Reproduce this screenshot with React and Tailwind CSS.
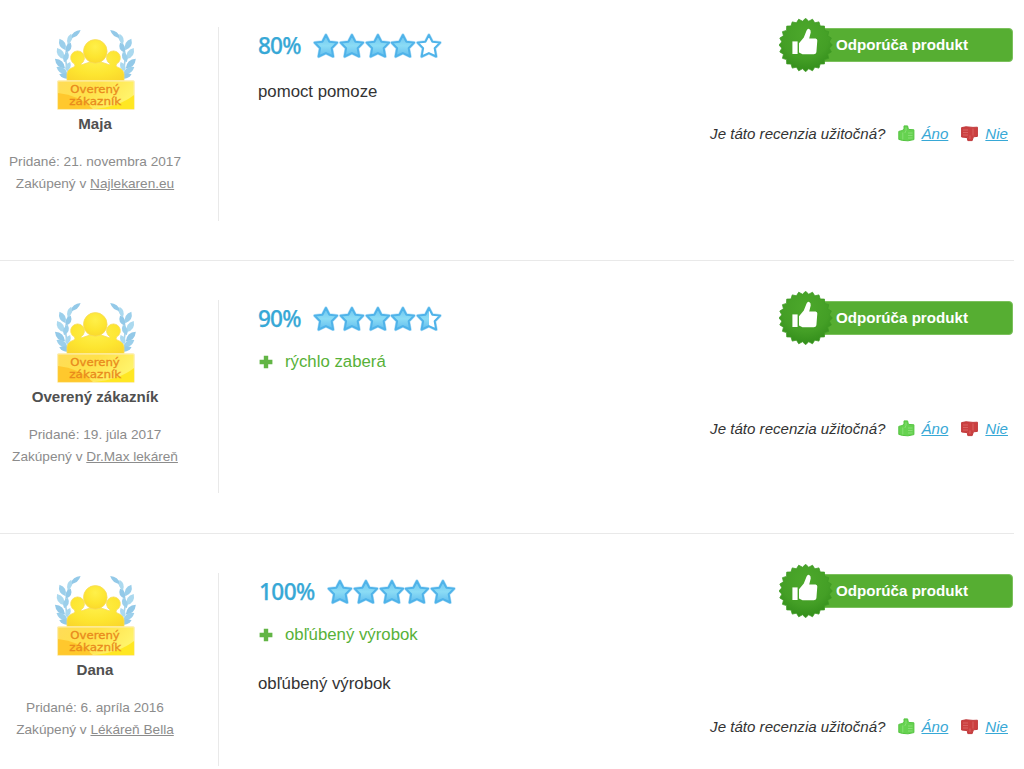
import React from "react";

const LEAVES = [
  [22.5, 7, -38, 6.5, 3],
  [16.5, 12, -72, 5.5, 3],
  [9.5, 17.5, 62, 6.5, 4],
  [15.5, 20.5, -66, 5.5, 3.6],
  [7.5, 26.5, 58, 6.5, 4.2],
  [13, 30, -70, 5.5, 3.6],
  [7, 36.5, 44, 7, 4],
  [15, 39.5, -64, 5, 3.4],
  [9, 43.5, 32, 6.5, 3.8],
  [12, 49, 16, 6, 3.4],
];

function Laurel() {
  return (
    <g>
      <path d="M21 8C12 18 9 34 18 50" fill="none" stroke="#a8d3ea" strokeWidth="1.6" />
      {LEAVES.map(([x, y, a, rx, ry], i) => (
        <path
          key={i}
          transform={`translate(${x} ${y}) rotate(${a})`}
          d={`M${-rx} 0Q0 ${-ry * 1.5} ${rx} 0Q0 ${ry * 1.5} ${-rx} 0Z`}
          fill={i % 3 === 0 ? "#93c9e8" : i % 3 === 1 ? "#abd9ef" : "#9bcfeb"}
        />
      ))}
    </g>
  );
}

function CustomerBadge({ id }) {
  return (
    <svg width="84" height="84" viewBox="0 0 84 84" className="block">
      <defs>
        <radialGradient id={`p${id}`} cx="0.5" cy="0.3" r="0.75">
          <stop offset="0" stopColor="#fff04a" />
          <stop offset="0.6" stopColor="#fde530" />
          <stop offset="1" stopColor="#fad62c" />
        </radialGradient>
        <linearGradient id={`b${id}`} x1="0" y1="0" x2="1" y2="0.35">
          <stop offset="0" stopColor="#ffdc58" />
          <stop offset="0.5" stopColor="#ffe14a" />
          <stop offset="1" stopColor="#fff36a" />
        </linearGradient>
      </defs>
      <Laurel />
      <g transform="translate(84.8 0) scale(-1 1)">
        <Laurel />
      </g>
      <g fill={`url(#p${id})`} stroke="#f8dc5a" strokeWidth="0.8">
        <path d="M14 56V47Q14.5 42 21 40Q22.5 39 21.5 37A6.9 6.9 0 1 1 28 36.8Q28 38.5 31 37Q34 36 37 35Q38.5 34 38 30H46.5Q46 34 48 35Q51 36 54 37Q57 38.5 57 36.8A6.9 6.9 0 1 1 63.5 37Q62.5 39 64 40Q70.5 42 71 47V56Z" />
        <circle cx="42.3" cy="24.4" r="11.8" />
      </g>
      <rect x="4.6" y="53.8" width="76.6" height="28.6" rx="1" fill={`url(#b${id})`} stroke="#fdeeb4" strokeWidth="1.2" />
      <path d="M5 66Q26 68 40 82H5Z" fill="#ffc021" opacity="0.75" />
      <path d="M40 82Q66 80 81 68V82Z" fill="#ffe61c" opacity="0.9" />
      <g fill="#e98a1c" stroke="#e98a1c" strokeWidth="0.3" fontFamily="'DejaVu Sans', sans-serif" fontSize="11">
        <text x="17.3" y="66.3" textLength="49.5" lengthAdjust="spacingAndGlyphs">Overený</text>
        <text x="16.3" y="77.8" textLength="52" lengthAdjust="spacingAndGlyphs">zákazník</text>
      </g>
    </svg>
  );
}

const STAR = "M13 1.9L16.5 8.7L24.3 9.6L18.8 15.2L20.3 23.6L13 20.1L5.7 23.6L7.2 15.2L1.7 9.6L9.5 8.7Z";

function Star({ fill, id }) {
  return (
    <svg width="25.8" height="26" viewBox="0 0 26 26" className="block shrink-0">
      <defs>
        <linearGradient id={id} x1="0" y1="0" x2="0" y2="1">
          <stop offset="0" stopColor="#6cc4f0" />
          <stop offset="0.5" stopColor="#8bdcf5" />
          <stop offset="1" stopColor="#62bdee" />
        </linearGradient>
        <clipPath id={`${id}c`}>
          <rect x="0" y="0" width={26 * fill} height="26" />
        </clipPath>
      </defs>
      <path d={STAR} fill="#fff" stroke="#b9e1f8" strokeWidth="3.2" strokeLinejoin="round" />
      <path d={STAR} fill="#fff" />
      <path d={STAR} fill={`url(#${id})`} clipPath={`url(#${id}c)`} />
      <path d={STAR} fill="none" stroke="#4fb3e9" strokeWidth="2" strokeLinejoin="round" />
    </svg>
  );
}

const SEAL = Array.from({ length: 48 }, (_, i) => {
  const r = i % 2 ? 24 : 26.7;
  const a = (i * Math.PI) / 24 - Math.PI / 2;
  return `${(26.6 + r * Math.cos(a)).toFixed(2)},${(27 + r * Math.sin(a)).toFixed(2)}`;
}).join(" ");

function Recommend({ id }) {
  return (
    <div className="flex h-[54px] w-[234px] items-center">
      <svg width="54" height="54" viewBox="0 0 54 54" className="relative z-10 block shrink-0">
        <defs>
          <radialGradient id={`s${id}`} cx="0.5" cy="0.3" r="0.75">
            <stop offset="0" stopColor="#4ca82b" />
            <stop offset="0.6" stopColor="#449f26" />
            <stop offset="1" stopColor="#2f8a18" />
          </radialGradient>
        </defs>
        <polygon points={SEAL} fill={`url(#s${id})`} stroke="#3f9a24" strokeWidth="0.8" strokeLinejoin="round" />
        <path d="M13.4 23.4H18.6V36H13.4Z" fill="#fff" />
        <path d="M20 25.2L24.8 19.4L27.6 12.4Q28.6 10.4 30.2 11Q32 11.9 31.7 14.6L30.2 20.4H36.6Q38.4 20.6 38.3 22.6L37.4 34.2Q37 36.2 34.8 36.2H23.5L20 34.6Z" fill="#fff" />
      </svg>
      <div className="-ml-[27px] flex h-[34px] grow items-center rounded-r-[4px] border border-[#7cc15d] bg-[#56ae32] pl-[29px]">
        <span className="text-[15.13px] leading-none font-bold whitespace-nowrap text-white">Odporúča produkt</span>
      </div>
    </div>
  );
}

const HAND = "M0.8 6.4L4.8 5.4L6 3.4V0.9H9.6L10.4 4.4L15.9 4.8V14.6L10 15.8L4.6 15.4L0.8 14.4Z";
const FIST = "M0.6 1.6L5 0.8L12 1.4L16.4 1.2V10.4L12.4 10.8L11.2 14.6H6.8L6.2 11.6L0.6 11Z";

function Useful({ className }) {
  return (
    <div className={`flex h-5 items-center justify-end pr-[6px] text-[15.1px] leading-5 italic ${className}`}>
      <span className="mr-[13px]">Je táto recenzia užitočná?</span>
      <svg width="17" height="17" viewBox="0 0 17 17" className="mr-[6px] block -translate-y-px">
        <path d={HAND} fill="#66d250" stroke="#54c440" strokeLinejoin="round" />
        <path d="M4.8 7.5V14.5M8 2.5V5.5L6.8 8M10 8H14.5M10 10.5H14.5M10 13H14.5" stroke="#88de74" fill="none" />
      </svg>
      <a className="mr-[13px] text-[#37a8d6] underline">Áno</a>
      <svg width="17" height="16" viewBox="0 0 17 16" className="mr-[7px] block">
        <path d={FIST} fill="#cb4040" stroke="#c03a3c" strokeLinejoin="round" />
        <path d="M12 2.5V9.5M2 4H7M2 6.5H7M2 9H7M9 9.5V13" stroke="#d86262" fill="none" />
      </svg>
      <a className="text-[#37a8d6] underline">Nie</a>
    </div>
  );
}

function Plus({ children }) {
  return (
    <div className="mt-[7px] flex h-5 items-center text-[16.8px] leading-5 text-[#57b138]">
      <svg width="14" height="14" viewBox="0 0 14 14" className="mr-[12px] ml-[1px] block">
        <path d="M4.8 0.8H9.2V4.8H13.4V9.2H9.2V13.2H4.8V9.2H0.6V4.8H4.8Z" fill="#62b545" />
      </svg>
      {children}
    </div>
  );
}

const REVIEWS = [
  { name: "Maja", date: "21. novembra 2017", shop: "Najlekaren.eu", score: 80, text: "pomoct pomoze", row: "h-[261px] pt-[27px]", body: "h-[194px]", textGap: "mt-[10px]", useful: "mt-[22px]" },
  { name: "Overený zákazník", date: "19. júla 2017", shop: "Dr.Max lekáreň", score: 90, plus: "rýchlo zaberá", row: "h-[273px] pt-[39px]", body: "h-[193px]", useful: "mt-[47px]" },
  { name: "Dana", date: "6. apríla 2016", shop: "Lékáreň Bella", score: 100, plus: "obľúbený výrobok", text: "obľúbený výrobok", row: "h-[235px] pt-[39px]", body: "h-[193px]", textGap: "mt-[29px]", useful: "mt-[23px]" },
];

function Review({ review, index }) {
  return (
    <article className={`w-[1014px] ${review.row} ${index < 2 ? "border-b border-[#e9e9e9]" : ""}`}>
      <div className={`flex ${review.body}`}>
        <aside className="flex w-[219px] shrink-0 flex-col items-center border-r border-[#e9e9e9] pr-[28px]">
          <CustomerBadge id={index} />
          <h3 className="mt-[3px] text-[15.1px] leading-5 font-bold whitespace-nowrap text-[#505050]">{review.name}</h3>
          <p className="mt-[17px] text-center text-[13.63px] leading-[22px] whitespace-nowrap text-[#8c8c8c]">
            Pridané: {review.date}
            <br />
            Zakúpený v <a className="underline">{review.shop}</a>
          </p>
        </aside>
        <section className="grow pl-[39px]">
          <div className="-mt-[9px] flex h-[54px] justify-between pr-[1px]">
            <div className="flex h-[54px] items-center">
              <span
                className={`mt-[3px] mr-[12px] font-['Noto_Sans',sans-serif] text-[22.6px] leading-none font-medium text-[#37a8d6] [-webkit-text-stroke:0.25px_#37a8d6] ${index === 2 ? "ml-[1px] w-[56px] tracking-[-0.6px]" : "w-[43px] tracking-[-0.8px]"}`}
              >
                {review.score}%
              </span>
              <div className="mt-[2px] flex">
                {[0, 1, 2, 3, 4].map((n) => (
                  <Star key={n} id={`st${index}${n}`} fill={Math.max(0, Math.min(1, review.score / 20 - n))} />
                ))}
              </div>
            </div>
            <Recommend id={index} />
          </div>
          {review.plus && <Plus>{review.plus}</Plus>}
          {review.text && <p className={`text-[16.8px] leading-5 ${review.textGap}`}>{review.text}</p>}
          <Useful className={review.useful} />
        </section>
      </div>
    </article>
  );
}

export default function App() {
  return (
    <main className="h-[769px] w-[1024px] overflow-hidden bg-white font-['Liberation_Sans',Arial,sans-serif] text-[#333]">
      {REVIEWS.map((r, i) => (
        <Review key={r.name} review={r} index={i} />
      ))}
    </main>
  );
}
